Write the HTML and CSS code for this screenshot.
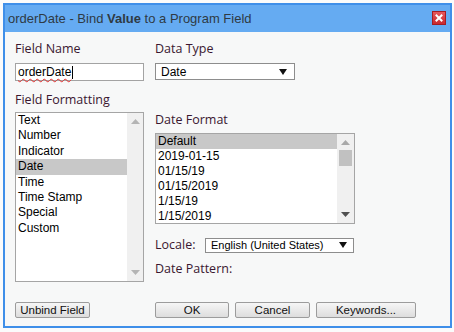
FILE: index.html
```html
<!DOCTYPE html>
<html>
<head>
<meta charset="utf-8">
<link rel="stylesheet" href="styles.css">
</head>
<body>
<div class="dialog">
  <div class="titlebar">
    <span class="title">orderDate - Bind <b>Value</b> to a Program Field</span>
    <span class="close">
      <svg width="14" height="14" viewBox="0 0 14 14">
        <path d="M4.5 4.5 L9.5 9.5 M9.5 4.5 L4.5 9.5" stroke="#fff" stroke-width="2" stroke-linecap="square"/>
      </svg>
    </span>
  </div>
  <div class="content">
    <div class="col col-left">
      <div class="label">Field Name</div>
      <div class="textbox"><span class="spell">orderDate</span><span class="caret"></span></div>
      <div class="label lbl-ff">Field Formatting</div>
      <div class="listbox lb-fields">
        <ul class="items">
          <li>Text</li>
          <li>Number</li>
          <li>Indicator</li>
          <li class="sel">Date</li>
          <li>Time</li>
          <li>Time Stamp</li>
          <li>Special</li>
          <li>Custom</li>
        </ul>
        <div class="vscroll">
          <div class="sbtn"><svg width="9" height="5" viewBox="0 0 9 5"><polygon points="0,5 9,5 4.5,0" fill="#b4b4b4"/></svg></div>
          <div class="track"></div>
          <div class="sbtn"><svg width="9" height="5" viewBox="0 0 9 5"><polygon points="0,0 9,0 4.5,5" fill="#b4b4b4"/></svg></div>
        </div>
      </div>
    </div>
    <div class="col col-right">
      <div class="label">Data Type</div>
      <div class="select sel-type"><span>Date</span><svg width="8" height="6" viewBox="0 0 8 6"><polygon points="0,0 8,0 4,6" fill="#111"/></svg></div>
      <div class="label lbl-df">Date Format</div>
      <div class="listbox lb-formats">
        <ul class="items">
          <li class="sel">Default</li>
          <li>2019-01-15</li>
          <li>01/15/19</li>
          <li>01/15/2019</li>
          <li>1/15/19</li>
          <li>1/15/2019</li>
        </ul>
        <div class="vscroll">
          <div class="sbtn"><svg width="9" height="5" viewBox="0 0 9 5"><polygon points="0,5 9,5 4.5,0" fill="#a8a8a8"/></svg></div>
          <div class="track"><div class="thumb"></div></div>
          <div class="sbtn"><svg width="9" height="5" viewBox="0 0 9 5"><polygon points="0,0 9,0 4.5,5" fill="#505050"/></svg></div>
        </div>
      </div>
      <div class="locale-row">
        <span class="label">Locale:</span>
        <div class="select sel-locale"><span>English (United States)</span><svg width="8" height="6" viewBox="0 0 8 6"><polygon points="0,0 8,0 4,6" fill="#111"/></svg></div>
      </div>
      <div class="label lbl-dp">Date Pattern:</div>
    </div>
    <div class="foot foot-left">
      <button class="btn btn-unbind">Unbind Field</button>
    </div>
    <div class="foot foot-right">
      <button class="btn btn-ok">OK</button>
      <button class="btn btn-cancel">Cancel</button>
      <button class="btn btn-kw">Keywords...</button>
    </div>
  </div>
</div>
</body>
</html>
```

FILE: styles.css
```css
* { box-sizing: border-box; }
html, body { margin: 0; padding: 0; }
body {
  background: #fbfbfb;
  padding: 3px;
  font-family: "Liberation Sans", Arial, sans-serif;
}
.dialog {
  width: 449px;
  height: 325px;
  border: 2px solid #3f8fe9;
  background: #f7f8f8;
  display: flex;
  flex-direction: column;
}
.titlebar {
  height: 27px;
  background: #65abf2;
  display: flex;
  align-items: center;
  justify-content: space-between;
  padding: 0 4px 0 3px;
  flex: none;
}
.title {
  font-size: 13px;
  color: #2f3a44;
  white-space: nowrap;
}
.title b { font-weight: bold; }
.close {
  width: 14px;
  height: 14px;
  margin-top: -1px;
  background: linear-gradient(#e7585c, #c9292f);
  border: 1px solid #a51c22;
  display: flex;
  align-items: center;
  justify-content: center;
}
.close svg { display: block; margin: -1px; }
.content {
  display: grid;
  grid-template-columns: 130px 290px;
  grid-template-rows: 241px auto;
  column-gap: 10px;
  padding: 9px 0 0 10px;
}
.col { display: flex; flex-direction: column; align-items: flex-start; }
.label {
  font-family: "Open Sans", "Liberation Sans", sans-serif;
  font-size: 12.5px;
  line-height: 16px;
  height: 16px;
  color: #3a1730;
  white-space: nowrap;
}
.textbox {
  margin-top: 6px;
  width: 129px;
  height: 18px;
  border: 1px solid #a3a3a3;
  background: #fff;
  display: flex;
  align-items: center;
  padding-left: 2px;
  font-size: 12px;
  color: #000;
}
.spell {
  text-decoration: underline wavy #e03030;
  text-decoration-thickness: 1px;
  text-underline-offset: 2px;
}
.caret {
  width: 1px;
  height: 13px;
  background: #000;
  margin-left: 1px;
}
.lbl-ff { margin-top: 11px; }
.listbox {
  display: flex;
  border: 1px solid #a5a5a5;
  background: #fff;
  font-size: 12px;
  color: #000;
}
.lb-fields { margin-top: 4px; width: 129px; height: 170px; }
.lb-formats { margin-top: 5px; width: 200px; height: 91px; }
.items {
  list-style: none;
  margin: 0;
  padding: 0;
  flex: 1;
  overflow: hidden;
}
.items li {
  height: 15px;
  line-height: 15px;
  padding-left: 2px;
  white-space: nowrap;
}
.lb-fields .items li { height: 15.4px; line-height: 15.4px; }
.items li.sel { background: #c8c8c8; }
.vscroll {
  width: 16px;
  background: #f0f0f0;
  display: flex;
  flex-direction: column;
}
.lb-formats .vscroll { width: 17px; }
.sbtn {
  height: 17px;
  display: flex;
  align-items: center;
  justify-content: center;
  flex: none;
}
.sbtn svg { display: block; }
.track { flex: 1; display: flex; justify-content: center; }
.thumb {
  width: 13px;
  height: 16px;
  margin-top: -1px;
  background: #c1c1c1;
}
.select {
  background: #fff;
  border: 1px solid #8d8d8d;
  display: flex;
  align-items: center;
  justify-content: space-between;
  color: #000;
  white-space: nowrap;
}
.select svg { display: block; }
.sel-type {
  margin-top: 6px;
  width: 140px;
  height: 17px;
  font-size: 12px;
  padding: 0 7px 0 5px;
}
.lbl-df { margin-top: 32px; }
.locale-row {
  margin-top: 13px;
  height: 16px;
  display: flex;
  align-items: center;
  gap: 0;
}
.locale-row .label { width: 50px; }
.sel-locale {
  width: 149px;
  height: 15px;
  font-size: 11px;
  padding: 0 6px 0 5px;
}
.lbl-dp { margin-top: 8px; }
.foot {
  margin-top: 20px;
  display: flex;
  gap: 6px;
}
.btn {
  flex: none;
  height: 16px;
  margin: 0;
  padding: 0;
  border: 1px solid #9c9c9c;
  border-radius: 2px;
  background: linear-gradient(#f6f6f6, #dddddd);
  font-family: "Liberation Sans", Arial, sans-serif;
  font-size: 11.5px;
  line-height: 14px;
  color: #111;
  text-align: center;
}
.btn-unbind { width: 75px; }
.btn-ok { width: 74px; }
.btn-cancel { width: 75px; }
.btn-kw { width: 100px; }
```
